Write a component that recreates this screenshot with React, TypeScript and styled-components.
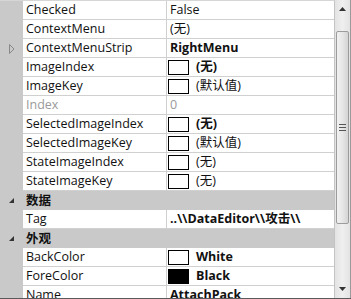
import React from 'react';
import styled, { createGlobalStyle } from 'styled-components';

interface Prop {
  name: string;
  value?: string;
  bold?: boolean;
  dim?: boolean;
  swatch?: string;
  expander?: boolean;
  category?: boolean;
}

const props: Prop[] = [
  { name: 'Checked', value: 'False' },
  { name: 'ContextMenu', value: '(无)' },
  { name: 'ContextMenuStrip', value: 'RightMenu', bold: true, expander: true },
  { name: 'ImageIndex', value: '(无)', bold: true, swatch: '#fff' },
  { name: 'ImageKey', value: '(默认值)', swatch: '#fff' },
  { name: 'Index', value: '0', dim: true },
  { name: 'SelectedImageIndex', value: '(无)', bold: true, swatch: '#fff' },
  { name: 'SelectedImageKey', value: '(默认值)', swatch: '#fff' },
  { name: 'StateImageIndex', value: '(无)', swatch: '#fff' },
  { name: 'StateImageKey', value: '(无)', swatch: '#fff' },
  { name: '数据', category: true },
  { name: 'Tag', value: '..\\\\DataEditor\\\\攻击\\\\', bold: true },
  { name: '外观', category: true },
  { name: 'BackColor', value: 'White', bold: true, swatch: '#fff' },
  { name: 'ForeColor', value: 'Black', bold: true, swatch: '#000' },
  { name: 'Name', value: 'AttachPack', bold: true },
];

const GlobalStyle = createGlobalStyle`
  html, body { margin: 0; padding: 0; background: #fff; }
  body { font-family: "Open Sans", "Noto Sans CJK SC", sans-serif; }
`;

const Frame = styled.div`
  width: 351px;
  height: 299px;
  display: flex;
  overflow: hidden;
  box-sizing: border-box;
  border-bottom: 1px solid #5a5a5a;
  background: #fff;
`;

const Grid = styled.div`
  width: 334px;
  flex: none;
  border-top: 1px solid #d6d6d6;
  border-right: 1px solid #c4c4c4;
  overflow: hidden;
  background: linear-gradient(to right, #c9c9c9 0, #c9c9c9 23px, #fff 23px);
`;

const Row = styled.div`
  display: grid;
  grid-template-columns: 23px 144px 1fr;
  height: 19px;
  box-sizing: border-box;
  font-size: 12.5px;
  line-height: 18px;
  color: #111;
`;

const Gutter = styled.div`
  display: flex;
  align-items: center;
  justify-content: center;
  padding-left: 0;
`;

const NameCell = styled.div<{ $dim?: boolean }>`
  padding-left: 3px;
  border-bottom: 1px solid #d0d0d0;
  border-right: 1px solid #d0d0d0;
  white-space: nowrap;
  overflow: hidden;
  color: ${(p) => (p.$dim ? '#9a9a9a' : '#111')};
`;

const ValueCell = styled.div<{ $bold?: boolean; $dim?: boolean }>`
  display: flex;
  align-items: center;
  padding-left: 3px;
  border-bottom: 1px solid #d0d0d0;
  white-space: nowrap;
  overflow: hidden;
  font-weight: ${(p) => (p.$bold ? 700 : 400)};
  color: ${(p) => (p.$dim ? '#9a9a9a' : '#111')};
`;

const Swatch = styled.span<{ $color: string }>`
  flex: none;
  width: 19px;
  height: 13px;
  margin: 0 7px 0 -2px;
  border: 1px solid #000;
  background: ${(p) => p.$color};
`;

const CategoryRow = styled.div`
  display: grid;
  grid-template-columns: 23px 1fr;
  height: 19px;
  box-sizing: border-box;
  background: #c9c9c9;
  font-size: 12.5px;
  font-weight: 700;
  line-height: 19px;
  color: #111;
`;

const CategoryLabel = styled.div`
  padding-left: 3px;
`;

const Scrollbar = styled.div`
  width: 15px;
  flex: none;
  display: flex;
  flex-direction: column;
  align-items: center;
  background: linear-gradient(to right, #e3e3e3, #efefef 50%, #e3e3e3);
  border-right: 2px solid #9a9a9a;
  position: relative;
`;

const Arrow = styled.div`
  height: 18px;
  width: 100%;
  display: flex;
  align-items: center;
  justify-content: center;
  flex: none;
`;

const Thumb = styled.div`
  margin-top: 13px;
  width: 13px;
  height: 193px;
  box-sizing: border-box;
  border: 1px solid #9c9c9c;
  border-radius: 2px;
  background: linear-gradient(to right, #f2f2f2, #e6e6e6 50%, #d4d4d4);
  display: flex;
  align-items: center;
  justify-content: center;
`;

const Spacer = styled.div`
  flex: 1;
`;

const Grip = () => (
  <svg width="7" height="7" viewBox="0 0 7 7">
    <path d="M0 0.5h7M0 3.5h7M0 6.5h7" stroke="#555" strokeWidth="1" />
  </svg>
);

const CatGlyph = () => (
  <svg width="7" height="7" viewBox="0 0 7 7">
    <path d="M6 1 L6 6 L1 6 Z" fill="#333" />
  </svg>
);

const ExpandGlyph = () => (
  <svg width="6" height="10" viewBox="0 0 6 10">
    <path d="M0.5 0.5 L5 5 L0.5 9.5 Z" fill="none" stroke="#888" strokeWidth="1" />
  </svg>
);

const App: React.FC = () => {
  return (
    <>
      <GlobalStyle />
      <Frame>
        <Grid>
          {props.map((p) =>
            p.category ? (
              <CategoryRow key={p.name}>
                <Gutter>
                  <CatGlyph />
                </Gutter>
                <CategoryLabel>{p.name}</CategoryLabel>
              </CategoryRow>
            ) : (
              <Row key={p.name}>
                <Gutter>{p.expander && <ExpandGlyph />}</Gutter>
                <NameCell $dim={p.dim}>{p.name}</NameCell>
                <ValueCell $bold={p.bold} $dim={p.dim}>
                  {p.swatch && <Swatch $color={p.swatch} />}
                  {p.value}
                </ValueCell>
              </Row>
            )
          )}
        </Grid>
        <Scrollbar>
          <Arrow>
            <svg width="7" height="4" viewBox="0 0 7 4">
              <path d="M0 4 L3.5 0 L7 4 Z" fill="#333" />
            </svg>
          </Arrow>
          <Thumb>
            <Grip />
          </Thumb>
          <Spacer />
          <Arrow>
            <svg width="7" height="4" viewBox="0 0 7 4">
              <path d="M0 0 L3.5 4 L7 0 Z" fill="#333" />
            </svg>
          </Arrow>
        </Scrollbar>
      </Frame>
    </>
  );
};

export default App;
